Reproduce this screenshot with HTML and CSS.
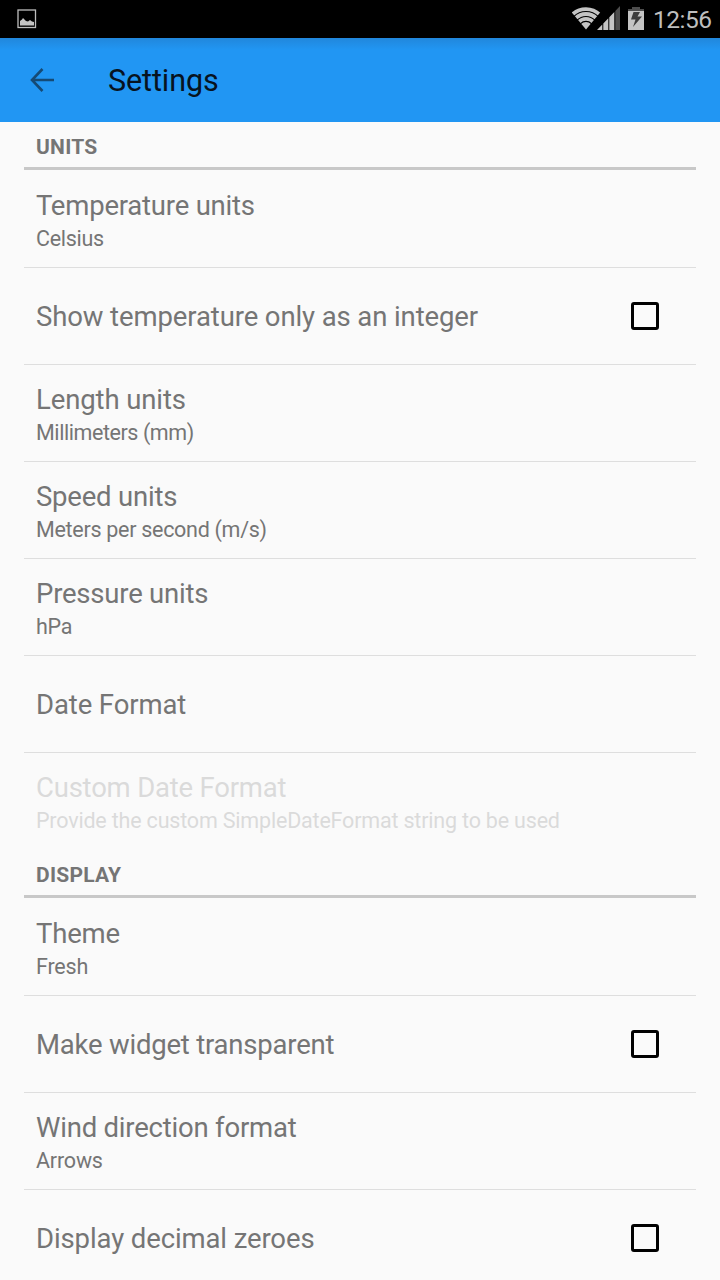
FILE: index.html
```html
<!DOCTYPE html>
<html lang="en">
<head>
<meta charset="utf-8">
<title>Settings</title>
<link rel="stylesheet" href="styles.css">
</head>
<body>
<div class="statusbar">
  <svg class="picture" width="20" height="20" viewBox="0 0 20 20"><rect x="1" y="1" width="17.500" height="17.500" fill="none" stroke="#bdbdbd" stroke-width="1.300"/><path d="M3 16.500V12l2-1.500L6 9l1.500 1.500L9 12l2 .5 2-1.500 2 1.500L17 13v3.500z" fill="#c4c4c4"/></svg>
  <svg class="signals" width="80" height="38" viewBox="0 0 80 38">
    <defs><clipPath id="fan"><path d="M14 29.500L-1 11.500V0H29V11.500z"/></clipPath></defs>
    <g clip-path="url(#fan)" fill="none" stroke="#c4c4c4"><circle cx="14" cy="29" r="19.900" stroke-width="3.700"/><circle cx="14" cy="29" r="15" stroke-width="3.800"/><circle cx="14" cy="29" r="10.100" stroke-width="3.700"/><circle cx="14" cy="29" r="3.500" stroke-width="7"/></g>
    <path d="M25 30l5.300-5.500V30zM31.300 30v-6.600l5-5.200V30zM37.300 30V17.200l5-5.200V30z" fill="#c4c4c4"/>
    <path d="M43.300 30V11L48 6v24z" fill="#4d4d4d"/>
    <path d="M60 7h8v2h4v3H56V9h4z" fill="#4d4d4d"/>
    <path d="M56 11h16v19H56z" fill="#c4c4c4"/>
    <path d="M61.500 12h6.500l-2.500 4.500h4.500L61 27l2.500-7.500h-4.500z" fill="#3c3c3c"/>
  </svg>
  <span class="clock">12:56</span>
</div>
<header class="appbar">
  <svg class="back" width="26" height="26" viewBox="0 0 26 26"><path d="M25 13H3M13.500 2L3 13l10.500 11" fill="none" stroke="#154a75" stroke-width="2.600"/></svg>
  <h1 class="heading">Settings</h1>
</header>
<main class="list">
  <h2 class="category">UNITS</h2>
  <div class="row"><div class="label snug">Temperature units</div><div class="summary">Celsius</div></div>
  <div class="row check"><div class="label">Show temperature only as an integer</div><span class="box"></span></div>
  <div class="row"><div class="label">Length units</div><div class="summary tight">Millimeters (mm)</div></div>
  <div class="row"><div class="label snug">Speed units</div><div class="summary">Meters per second (m/s)</div></div>
  <div class="row"><div class="label snug">Pressure units</div><div class="summary">hPa</div></div>
  <div class="row"><div class="label">Date Format</div></div>
  <div class="row disabled"><div class="label snug">Custom Date Format</div><div class="summary long">Provide the custom SimpleDateFormat string to be used</div></div>
  <h2 class="category">DISPLAY</h2>
  <div class="row"><div class="label snug">Theme</div><div class="summary long">Fresh</div></div>
  <div class="row check"><div class="label snug">Make widget transparent</div><span class="box"></span></div>
  <div class="row"><div class="label snug">Wind direction format</div><div class="summary long">Arrows</div></div>
  <div class="row check"><div class="label">Display decimal zeroes</div><span class="box"></span></div>
</main>
</body>
</html>
```
FILE: styles.css
```css
* { box-sizing: border-box; }
body {
  margin: 0;
  height: 1280px;
  overflow: hidden;
  background: #fafafa;
  color: #757575;
  font-family: Roboto, sans-serif;
}
.statusbar {
  display: flex;
  align-items: center;
  height: 38px;
  padding: 0 7px 0 17px;
  background: #000;
}
.signals { margin-left: auto; }
.clock {
  width: 60px;
  margin-left: 1px;
  padding-top: 2px;
  font-size: 24.5px;
  line-height: 36px;
  letter-spacing: -0.5px;
  color: #bebebe;
  white-space: nowrap;
}
.appbar {
  display: flex;
  align-items: center;
  height: 84px;
  padding-left: 29px;
  background: linear-gradient(#2187dc, #2196f3 12px);
}
.heading {
  margin: 0 0 0 53px;
  padding-top: 2px;
  font-size: 30.5px;
  font-weight: 400;
  line-height: 36px;
  letter-spacing: -0.1px;
  color: #07131f;
}
.list { padding: 0 24px; }
.category {
  height: 49px;
  margin: 0;
  padding: 13px 12px 0;
  font-size: 21px;
  font-weight: 700;
  line-height: 25px;
  letter-spacing: 0.25px;
  background: linear-gradient(#c8c8c8, #c8c8c8) 0 45px / 100% 3px no-repeat;
}
.row {
  display: flex;
  flex-direction: column;
  justify-content: center;
  height: 97px;
  padding: 2px 12px 0;
  border-bottom: 1px solid #dedede;
}
.check {
  flex-direction: row;
  align-items: center;
  justify-content: space-between;
  padding-right: 37px;
}
.label {
  font-size: 27.5px;
  line-height: 36px;
  letter-spacing: -0.11px;
  white-space: nowrap;
}
.label.snug { letter-spacing: -0.21px; }
.summary {
  margin-top: 1px;
  font-size: 21.5px;
  line-height: 28px;
  letter-spacing: -0.29px;
  white-space: nowrap;
}
.summary.tight { letter-spacing: -0.43px; }
.summary.long { letter-spacing: -0.19px; }
.box {
  width: 28px;
  height: 28px;
  margin-bottom: 2px;
  border: 3px solid #000;
  border-radius: 3px;
}
.disabled {
  color: #dadada;
  border-color: transparent;
}
```
